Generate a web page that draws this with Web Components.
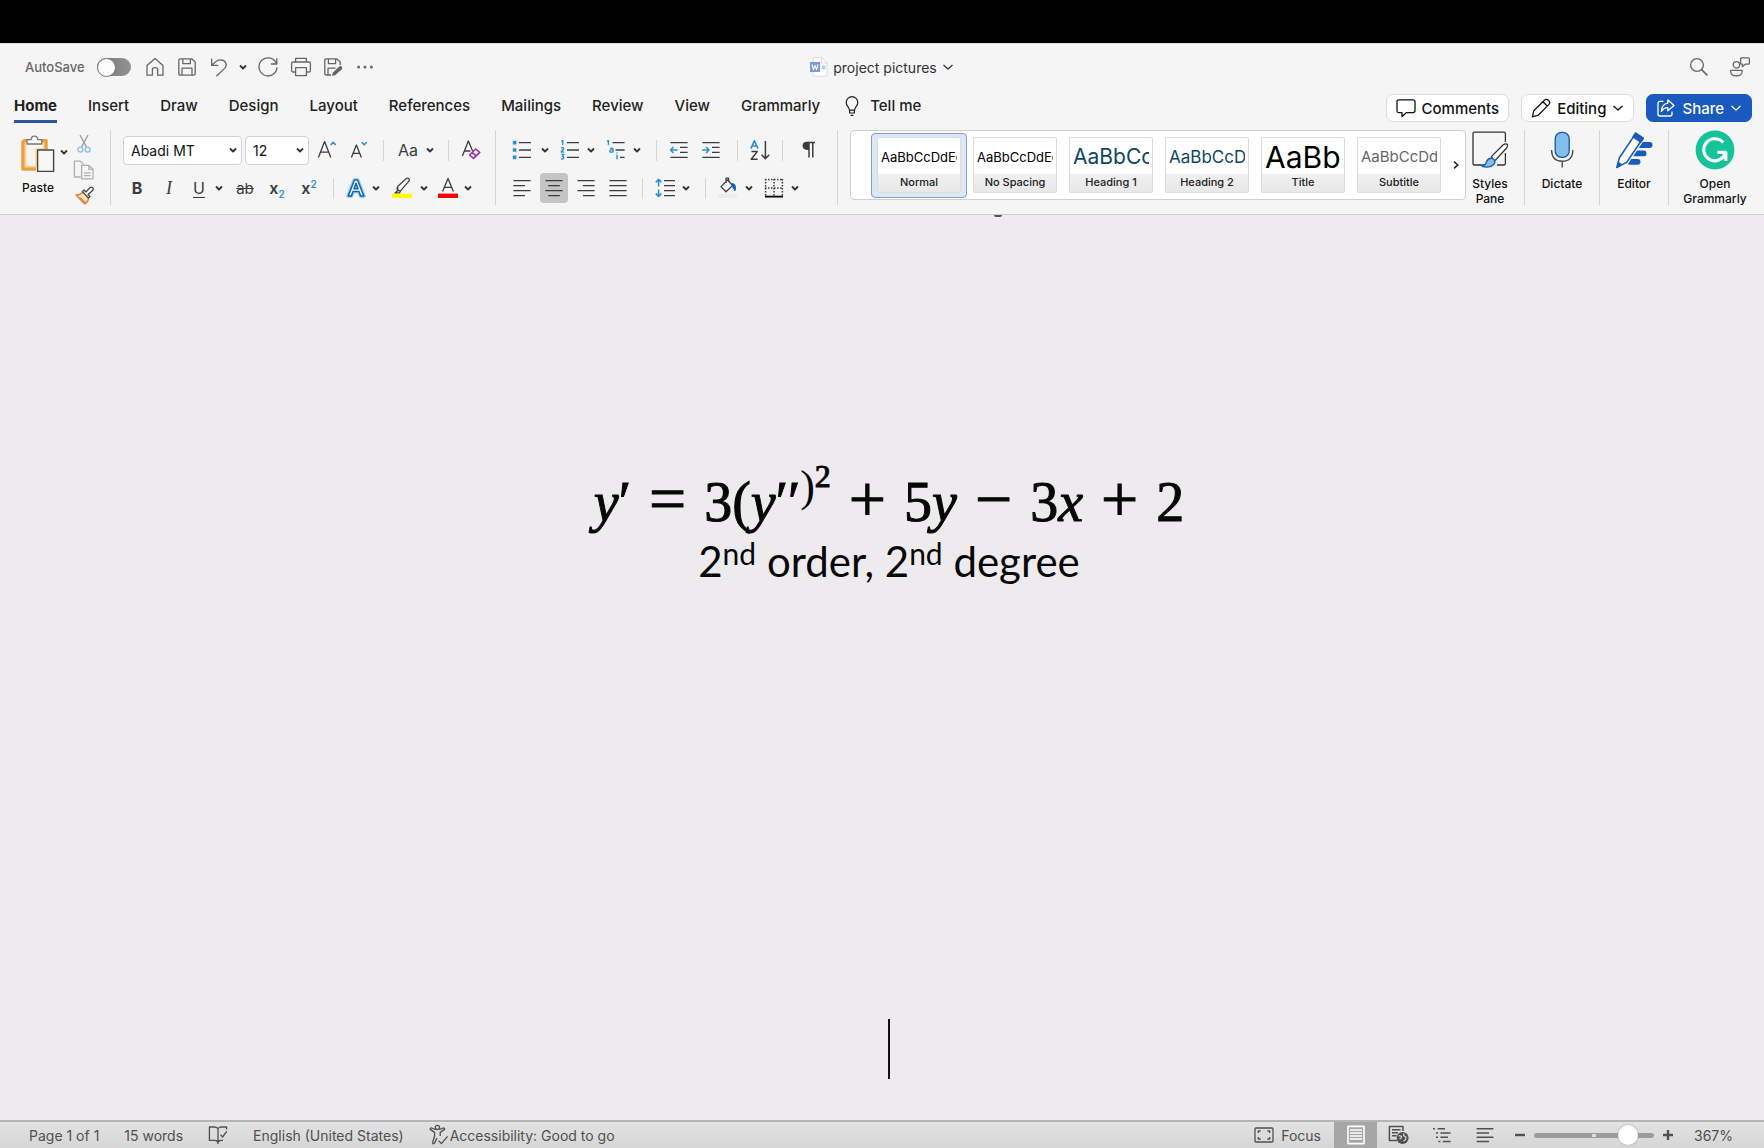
<!DOCTYPE html>
<html lang="en">
<head>
<meta charset="utf-8">
<title>project pictures</title>
<style>
html, body { margin: 0; height: 100%; }
body { font-family: Inter, "Liberation Sans", sans-serif; color: #1f1f1f; background: #000; overflow: hidden; }
</style>
</head>
<body>
<word-app></word-app>
<script>
const ICONS = {
  chev: [10, 10, '<path d="M2 3.5 5 6.5 8 3.5" stroke-width="1.8" stroke="#333"/>'],
  chevthin: [12, 12, '<path d="M1.5 4 6 8 10.5 4" stroke-width="1.3"/>'],
  right: [10, 10, '<path d="M3 1.6 6.8 5 3 8.4" stroke-width="1.6" stroke="#222"/>'],
  home: [20, 20, '<path d="M2 8.6 10 1.4 18 8.6V18.2H12.6V12.6Q12.6 10.6 10 10.6T7.4 12.6V18.2H2Z"/>'],
  save: [20, 20, '<path d="M3.5 1.8H14.6L18.2 5V16.5Q18.2 18.2 16.5 18.2H3.5Q1.8 18.2 1.8 16.5V3.5Q1.8 1.8 3.5 1.8ZM5.8 1.8V6.6H13.4V1.8M5 18.2V11.2H15V18.2"/>'],
  undo: [20, 20, '<path d="M2.6 1.6V8.4H9.2M2.8 8.2C6 4.6 8 2.8 11.5 2.8C16.5 2.8 19 7.8 15.6 11.4L7.4 19.2"/>'],
  redo: [22, 22, '<path d="M19.6 8.2A9 9 0 1 0 20 11.4M19.8 2.2V8H14"/>'],
  print: [22, 22, '<path d="M5.6 6V2.4H16.4V6M5.6 16H3.2Q1.6 16 1.6 14.4V7.8Q1.6 6 3.4 6H18.6Q20.4 6 20.4 7.8V14.4Q20.4 16 18.8 16H16.4M5.6 11.6H16.4V19.6H5.6Z"/>'],
  saveedit: [20, 20, '<path d="M8 18H3.5Q1.8 18 1.8 16.5V3.5Q1.8 1.8 3.5 1.8H13.6L17.2 5V8M5.4 1.8V6.6H12.6V1.8M5 18V11.2H12.6"/><path d="M8.8 19 10 15.6 16.2 9.6Q17.6 8.4 18.8 9.8T18.6 12.4L12.4 18Z" fill="currentColor" stroke="none"/>'],
  dots: [20, 20, '<g fill="currentColor" stroke="none"><circle cx="3.6" cy="10" r="1.5"/><circle cx="10" cy="10" r="1.5"/><circle cx="16.4" cy="10" r="1.5"/></g>'],
  doc: [18, 20, '<path d="M3 .8H11.6L17 6V19.2H3Z" fill="#fff" stroke="#dcdcdc" stroke-width="1"/><path d="M11.6 .8V6H17" stroke="#d0d0d0" stroke-width=".8"/><path d="M12 9.5H15.5M12 11.5H15.5" stroke="#9dc0ee"/><rect x="0" y="5" width="10" height="10" fill="#7b9bdc" stroke="none"/><path d="M2 7.4 3.5 12.6 5 8.4 6.5 12.6 8 7.4" stroke="#fff" stroke-width="1.1"/>'],
  search: [20, 20, '<circle cx="8" cy="8" r="6.4"/><path d="M12.6 12.6 18.4 18.4" stroke-width="1.5"/>'],
  person: [22, 22, '<circle cx="7.4" cy="8.8" r="3.2"/><path d="M1.6 14.4H13.2Q13.6 19.8 7.4 19.8T1.6 14.4ZM12.4 1.8H19.2Q20.4 1.8 20.4 3V7Q20.4 8.2 19.2 8.2H16.4L13.4 10.6V8.2H12.6Q11.6 8.2 11.6 7V3Q11.6 1.8 12.4 1.8Z"/>'],
  bulb: [16, 22, '<path d="M5.4 15.2C5.4 12 2.2 11.2 2.2 7.4A5.8 5.8 0 0 1 13.8 7.4C13.8 11.2 10.6 12 10.6 15.2ZM5.6 15.4V18H10.4V15.4M6.6 20.4H9.4" stroke-width="1.2"/>'],
  comment: [20, 20, '<path d="M3 1.8H17Q19 1.8 19 3.8V12.6Q19 14.6 17 14.6H10.6L6 18.6V14.6H3Q1 14.6 1 12.6V3.8Q1 1.8 3 1.8Z"/>'],
  pencil: [20, 20, '<path d="M1.4 18.8 2.8 12.8 13.4 2.2Q15.4 .4 17.6 2.4T17.8 6.6L7.2 17.2ZM12 3.8 16.2 8"/>'],
  share: [20, 20, '<path d="M7.4 3.4H4Q2 3.4 2 5.4V16Q2 18 4 18H14Q16 18 16 16V13.6"/><path d="M11.8 1.8 18 7.4 11.8 12.8V9.6Q7.8 9.6 5.4 13.4Q5.8 6 11.8 5.2Z"/>'],
  paste: [36, 38, '<path d="M3 5.6H26V14M16 34H3V5.6" stroke="#f29a3e" stroke-width="3.4"/><path d="M5.6 8H23.6V14H16V31.6H5.6Z" fill="#f7f4ee" stroke="#f9d08f" stroke-width="1.4"/><path d="M7 9V4.6H11Q11.4 1.2 14.4 1.2T17.8 4.6H21.8V9Z" fill="#f7f7f7" stroke="#777" stroke-width="1.3"/><rect x="17.6" y="15" width="16" height="21.4" fill="#f7f7f7" stroke="#444" stroke-width="1.4"/>'],
  cut: [14, 20, '<path d="M3 1 9.6 13.4M11 1 4.4 13.4" stroke="#9b9b9b"/><g stroke="#8cc0e6" stroke-width="1.4"><circle cx="3.4" cy="15.6" r="2.5"/><circle cx="10.6" cy="15.6" r="2.5"/></g>'],
  copy: [22, 20, '<g stroke="#b0b0b0"><path d="M7.6 17H1.4V1.2H7.4L10.6 4.4M8.6 5.4H16L20 9.2V18.8H8.6ZM15.8 5.4V9.4H20M11 12.8H17.6M11 15.6H17.6"/></g>'],
  brush: [20, 20, '<path d="M2 9 11 18Q15 14.6 14.4 11.4L8.8 5.8Q7.2 8.6 2 9Z" fill="#fbe3c4" stroke="#e8843a" stroke-width="1.6"/><path d="M6 12 11 17" stroke="#e8843a" stroke-width="2"/><path d="M8.4 5.6 10 4 12 6 16 1.6Q17.6.6 18.8 2T18 5L14 8.6 16 10.4 14.4 12Z" fill="#fff" stroke="#444"/>'],
  grow: [20, 22, '<path d="M1.4 18.4 7.6 2.6 13.8 18.4M3.6 13.2H11.6"/><path d="M13.6 6 16.2 3.4 18.8 6" stroke="#2b8fd4" stroke-width="1.6"/>'],
  shrink: [20, 22, '<path d="M2.4 18.4 7.4 6 12.4 18.4M4 14.4H10.8"/><path d="M12.6 3.2 15.2 5.8 17.8 3.2" stroke="#2b8fd4" stroke-width="1.6"/>'],
  eraser: [20, 22, '<path d="M1.4 17 7.4 2 11.6 12M3.6 12H9.4"/><path d="M8.6 16 14.6 10 18.8 13.4 12.6 19.4ZM11.2 13.6 15.4 17.2" stroke="#9b30a8" stroke-width="1.6"/>'],
  effects: [20, 20, '<g><path d="M2.2 18 8.4 2H11.6L17.8 18H14.6L13 13.6H7L5.4 18ZM8 10.8H12L10 5.2Z" stroke="#9dd0f2" stroke-width="4"/><path d="M2.2 18 8.4 2H11.6L17.8 18H14.6L13 13.6H7L5.4 18ZM8 10.8H12L10 5.2Z" fill="#fff" stroke="#0b63b5" stroke-width="1.5"/></g>'],
  highlight: [20, 22, '<path d="M5.6 9.4 14.4 1.4Q16 .6 17 1.8T16.6 4.4L9 13.4 6 13.6ZM5.8 9.6Q4.4 11.4 5.8 13.4L3 16H7.4L8.8 13.4" fill="#f7f7f7" stroke="#444"/><rect x="0" y="16.6" width="20" height="4.4" fill="#ffff00" stroke="none"/>'],
  fontcolor: [20, 22, '<path d="M4.6 14.4 10 1.4 15.4 14.4M6.4 10.4H13.6"/><rect x="0" y="16.6" width="20" height="4.4" fill="#f00" stroke="none"/>'],
  bullets: [20, 20, '<path d="M7 2.6H19M7 10H19M7 17.4H19"/><path d="M.8 .8h3.6v3.6H.8zM.8 8.2h3.6v3.6H.8zM.8 15.6h3.6v3.6H.8z" fill="#2b8fd4" stroke="none"/>'],
  numbers: [20, 20, '<path d="M7 2.6H19M7 10H19M7 17.4H19"/><g stroke="#2b8fd4" stroke-width="1.4"><path d="M1.4 1.4 2.8.6V5M1.2 8Q3.8 7 3.6 8.8L1.2 12H4M1.2 14.4H3.8L2.6 16.4Q4.4 17 3.4 18.6Q2.6 19.4 1 18.8"/></g>'],
  multi: [20, 20, '<path d="M6.6 2.6H18.6M9.6 10H18.6M14 17.4H18.6"/><g stroke="#2b8fd4" stroke-width="1.4"><path d="M1 1.4 2.4.6V5M4 8.6Q7 7.4 7 9.4V12.4M7 10Q3.8 9.6 3.8 11.2T7 11.8M11 14.8V19.2M11 12.4V13.4"/></g>'],
  outdent: [20, 20, '<path d="M1.4 2.6H18.6M11 7.4H18.6M11 12.4H18.6M1.4 17.4H18.6"/><path d="M8.6 10H1.6M4.4 7 1.6 10 4.4 13" stroke="#2b8fd4" stroke-width="1.6"/>'],
  indent: [20, 20, '<path d="M1.4 2.6H18.6M11 7.4H18.6M11 12.4H18.6M1.4 17.4H18.6"/><path d="M1 10H8M5.2 7 8 10 5.2 13" stroke="#2b8fd4" stroke-width="1.6"/>'],
  sort: [20, 20, '<path d="M.8 8.6 4.4.8 8 8.6M2 6H6.8" stroke="#2b8fd4" stroke-width="1.6"/><path d="M1.4 11.6H7.2L1.2 19.2H7.6M15.4 1V18.4M11.6 14.8 15.4 18.6 19.2 14.8" stroke-width="1.5"/>'],
  pilcrow: [16, 18, '<path d="M7.4 1.4H14M8 1.4V16.4M11.8 1.4V16.4" stroke-width="1.5"/><path d="M8 .8H6Q1.6 1 1.6 4.8T6 9H8Z" fill="currentColor" stroke="none"/>'],
  left: [20, 20, '<path d="M1.4 2.6H18.6M1.4 7.6H13M1.4 12.6H18.6M1.4 17.6H13"/>'],
  center: [20, 20, '<path d="M1.4 2.6H18.6M4.2 7.6H15.8M1.4 12.6H18.6M4.2 17.6H15.8"/>'],
  alignright: [20, 20, '<path d="M1.4 2.6H18.6M7 7.6H18.6M1.4 12.6H18.6M7 17.6H18.6"/>'],
  justify: [20, 20, '<path d="M1.4 2.6H18.6M1.4 7.6H18.6M1.4 12.6H18.6M1.4 17.6H18.6"/>'],
  spacing: [22, 20, '<path d="M10 2.6H21M10 7.6H21M10 12.6H21M10 17.6H21"/><path d="M4.6 1.4V8.4M1.8 4.2 4.6 1.4 7.4 4.2M4.6 11.4V18.4M1.8 15.6 4.6 18.4 7.4 15.6" stroke="#2b8fd4" stroke-width="1.6"/>'],
  bucket: [20, 22, '<path d="M3 9.6 9.6 3 14.6 8.6 8 14.8ZM8 6V1.2H10.6V5" stroke-width="1.3"/><path d="M14 6.6Q18.4 7.4 17 13.4Q15 11.4 14 6.6Z" fill="#0b63b5" stroke="#0b63b5"/><rect x="0" y="17" width="19" height="4" fill="#ececec" stroke="none"/>'],
  borders: [20, 20, '<g stroke-dasharray="1.5 1.5" stroke-width="1.5"><path d="M1 1.6H19M1.6 1V18M18.4 1V18M10 1V18M1 10H19"/></g><path d="M1 18.6H19" stroke="#000" stroke-width="1.8"/>'],
  styles: [38, 38, '<path d="M16 34H3.4Q2 34 2 32.6V2.6Q2 1.2 3.4 1.2H33Q34.4 1.2 34.4 2.6V11M34.4 22V32.6Q34.4 34 33 34H26" stroke="#333"/><path d="M20.4 25.6 32 14Q34.4 12.2 36.4 13.4Q37 15.4 35.6 17L24 29.6Q21 29 20.4 25.6Z" fill="#fff" stroke="#333"/><path d="M11 35.4Q14.6 34.4 15.6 30.4Q17.6 26.6 21.4 27.4Q24.6 29 23.6 32.4Q20 37.6 11 35.4Z" fill="#83bdea" stroke="#0b63b5"/>'],
  mic: [24, 38, '<rect x="5.2" y="1.4" width="14" height="25" rx="6.4" fill="#83bdea" stroke="#0b5cad"/><path d="M1.6 19Q1.6 30.2 12.2 30.2T22.8 19M12.2 30.2V36.4" stroke="#444"/>'],
  editor: [38, 38, '<path d="M24 14H34.6M20 22.4H28.6M15 30.8H22.6" stroke="#185abd" stroke-width="5.8" stroke-linecap="round"/><path d="M2 36.4 4.4 26.8 20.8 2.4 28 7.2 11.6 31.4Z" fill="#fff" stroke="#f5f5f5" stroke-width="4"/><path d="M2 36.4 4.4 26.8 20.8 2.4 28 7.2 11.6 31.4Z" fill="#fff" stroke="#185abd" stroke-width="1.6"/><path d="M20.6 2 28.4 7.4 25.8 11.2 18 5.8ZM2 36.4 3.2 31.4 6 33.4Z" fill="#185abd" stroke="#185abd" stroke-width="1.4"/>'],
  grammarly: [40, 40, '<circle cx="20" cy="20" r="19.4" fill="#15c39a" stroke="none"/><path d="M28.2 12.6A11 11 0 1 0 30.2 23.4M22.4 22.4H30.8V31" stroke="#fff" stroke-width="3.2"/>'],
  book: [20, 20, '<path d="M10 17.4V3.4Q8.4 2 6.4 2H1.4V15.4H7Q9 15.4 10 17.4ZM10 3.4Q11.4 2 13.4 2H18.6V4.6M10 17.4Q11 15.4 13 15.4H15M12.6 9.6 14.6 12 18.8 6.4M10 16V19"/>'],
  access: [20, 22, '<circle cx="8.4" cy="3.4" r="2.1"/><path d="M6.6 5.6 2.6 4Q.8 4 1.2 5.4L5.6 8.4V12L3.6 18.6Q4 20.8 5.4 19.4L8 14M10.2 5.6 14.2 4Q16 4 15.6 5.4L11.2 8.4V12M9.6 16.6 12.4 19.6 18.6 12.4"/>'],
  focus: [20, 16, '<rect x="1" y="1" width="18" height="14" rx="1"/><path d="M4.4 6V4H6.6M13.4 4H15.6V6M15.6 10V12H13.4M6.6 12H4.4V10" stroke-width="1.5"/>'],
  layout: [20, 20, '<rect x="2" y="1.4" width="16" height="17.2" stroke="#fff" stroke-width="1.6"/><path d="M4 5H16M4 8H16M4 11H16M4 14H16" stroke="#fff"/>'],
  web: [22, 20, '<path d="M9 15.4H1.4V1.4H15V6M4 4.8H12.6M4 7.8H10M4 10.8H8.6" stroke-width="1.5"/><circle cx="14.6" cy="13" r="6" fill="currentColor" stroke="none"/><path d="M10.6 10.6 13.6 11.2 13 13.2 11.6 14M16 8.4 15.4 10.6 18 12 17.6 14.6 15.4 16" stroke="#ddd" stroke-width="1.1"/>'],
  outline: [20, 16, '<path d="M1 1.8H3M5.6 1.8H13M4 6H6M8.4 6H18.6M4 10.2H6M8.4 10.2H16M6.4 14.4H8.4M10.8 14.4H18.6" stroke-width="1.5"/>'],
  draft: [20, 16, '<path d="M1.6 1.8H18.4M1.6 6H14M1.6 10.2H18.4M1.6 14.4H14" stroke-width="1.5"/>'],
  minus: [12, 12, '<path d="M1 6H11" stroke-width="2.4"/>'],
  plus: [12, 12, '<path d="M1 6H11M6 1V11" stroke-width="2.4"/>']
};

class UiIcon extends HTMLElement {
  connectedCallback() {
    const [w, h, body] = ICONS[this.getAttribute('name')];
    this.attachShadow({ mode: 'open' }).innerHTML =
      `<style>:host{display:block;flex:none;width:${w}px;height:${h}px}svg{display:block}</style>
       <svg width="${w}" height="${h}" viewBox="0 0 ${w} ${h}" fill="none" stroke="currentColor" stroke-width="1.3" stroke-linejoin="round" aria-hidden="true">${body}</svg>`;
  }
}
customElements.define('ui-icon', UiIcon);

const RESET = `:host,*{box-sizing:border-box}button{font:inherit;color:inherit;background:none;border:0;padding:0;margin:0;display:flex;align-items:center;justify-content:center}`;

/* Square tool button; "menu" adds the drop-down arrow, "w" sets the width of the face. */
class ToolButton extends HTMLElement {
  connectedCallback() {
    const icon = this.getAttribute('icon');
    this.attachShadow({ mode: 'open' }).innerHTML = `<style>${RESET}
      :host{display:flex;align-items:center;height:30px;flex:none}
      .face{width:${this.getAttribute('w') || 24}px;height:30px;border-radius:4px;white-space:nowrap}
      .menu{width:var(--chev,16px);height:30px}
      :host([active]) .face{background:#c4c4c4}
    </style>
    <button class="face" aria-label="${this.getAttribute('label')}">${icon ? `<ui-icon name="${icon}"></ui-icon>` : '<slot></slot>'}</button>
    ${this.hasAttribute('menu') ? '<button class="menu" aria-label="More options"><ui-icon name="chev"></ui-icon></button>' : ''}`;
  }
}
customElements.define('tool-button', ToolButton);

class TallButton extends HTMLElement {
  connectedCallback() {
    this.attachShadow({ mode: 'open' }).innerHTML = `<style>${RESET}
      :host{display:block;flex:none;width:${this.getAttribute('w')}px}
      button{flex-direction:column;gap:6px;width:100%}
      .art{height:40px;display:flex;align-items:center}
      .text{font-size:12px;line-height:15px;font-weight:500;color:#111;text-align:center}
    </style><button><span class="art"><ui-icon name="${this.getAttribute('icon')}"></ui-icon></span><span class="text"><slot></slot></span></button>`;
  }
}
customElements.define('tall-button', TallButton);

class PickList extends HTMLElement {
  connectedCallback() {
    this.attachShadow({ mode: 'open' }).innerHTML = `<style>${RESET}
      :host{display:grid;grid-template-columns:1fr 14px;align-items:center;flex:none;width:${this.getAttribute('w')}px}
      select{grid-area:1/1/2/3;appearance:none;height:29px;width:100%;font:400 14px Inter,sans-serif;color:#111;background:#fff;border:1px solid #d2d2d2;border-radius:4px;padding:0 14px 0 7px;margin:0}
      ui-icon{grid-area:1/2;pointer-events:none;color:#222}
    </style><select aria-label="${this.getAttribute('label')}"><option>${this.getAttribute('value')}</option></select><ui-icon name="chev"></ui-icon>`;
  }
}
customElements.define('pick-list', PickList);

class StyleCard extends HTMLElement {
  connectedCallback() {
    this.attachShadow({ mode: 'open' }).innerHTML = `<style>${RESET}
      :host{display:block;flex:none}
      button{display:block;width:96px;height:65px;padding:0 5px;border:1px solid transparent;border-radius:4px;text-align:left}
      :host([selected]) button{background:#dce6f5;border-color:#7ba0d8}
      .card{display:block;border:1px solid #dcdcdc;border-radius:2px;background:#fff;overflow:hidden}
      .sample{display:block;height:36px;line-height:38px;margin:0 3px;overflow:hidden;white-space:nowrap;color:${this.getAttribute('ink') || '#000'};font-size:${this.getAttribute('size')}px}
      .name{display:block;height:18px;line-height:17px;font-size:11px;font-weight:500;color:#222;text-align:center;background:linear-gradient(#f0f0f0,#e8e8e8)}
    </style><button><span class="card"><span class="sample">${this.getAttribute('sample')}</span><span class="name"><slot></slot></span></span></button>`;
  }
}
customElements.define('style-card', StyleCard);

class TitleBar extends HTMLElement {
  connectedCallback() {
    this.attachShadow({ mode: 'open' }).innerHTML = `<style>${RESET}
      :host{display:grid;grid-template-columns:1fr auto 1fr;align-items:center;height:48px;border-top:1px solid #ddd;padding-bottom:1px;color:#666}
      .quick{display:flex;align-items:center;padding-left:25px}
      label{display:flex;align-items:center;gap:12px;margin-right:8px;font-size:13px;font-weight:500}
      input{appearance:none;width:34px;height:18px;margin:0;border-radius:9px;background:linear-gradient(90deg,#777,#929292);display:flex;align-items:center}
      input::before{content:"";width:17px;height:17px;border-radius:50%;background:#fdfdfd;border:1px solid #777}
      .file{display:flex;align-items:center;gap:5px;font-size:14px;color:#333}
      .end{display:flex;justify-content:flex-end;gap:20px;padding-right:13px}
    </style>
    <div class="quick">
      <label>AutoSave<input type="checkbox" role="switch"></label>
      <tool-button w="32" icon="home" label="Home"></tool-button>
      <tool-button w="32" icon="save" label="Save"></tool-button>
      <tool-button w="32" icon="undo" label="Undo" menu></tool-button>
      <tool-button w="34" icon="redo" label="Redo"></tool-button>
      <tool-button w="32" icon="print" label="Print"></tool-button>
      <tool-button w="32" icon="saveedit" label="Save as"></tool-button>
      <tool-button w="32" icon="dots" label="More"></tool-button>
    </div>
    <button class="file"><ui-icon name="doc"></ui-icon>project pictures<ui-icon name="chevthin"></ui-icon></button>
    <div class="end">
      <button aria-label="Search"><ui-icon name="search"></ui-icon></button>
      <button aria-label="Account"><ui-icon name="person"></ui-icon></button>
    </div>`;
  }
}
customElements.define('title-bar', TitleBar);

class TabBar extends HTMLElement {
  connectedCallback() {
    const tabs = ['Home', 'Insert', 'Draw', 'Design', 'Layout', 'References', 'Mailings', 'Review', 'View', 'Grammarly'];
    this.attachShadow({ mode: 'open' }).innerHTML = `<style>${RESET}
      :host{display:flex;align-items:center;justify-content:space-between;height:36px;padding:0 12px 2px 14px;font-size:15px;color:#222}
      nav{display:flex;gap:31px;align-self:flex-start}
      nav button{height:32px;font-weight:500;border-bottom:3px solid transparent}
      nav .on{font-weight:700;border-bottom-color:#2b579a}
      nav .tell{gap:10px;margin-left:-7px}
      .actions{display:flex;gap:12px}
      .actions button{height:28px;padding:0 9px;gap:6px;border:1px solid #dcdcdc;border-radius:7px;background:#fff;color:#111;font-weight:500}
      .actions .share{background:#185abd;border-color:#185abd;color:#fff}
    </style>
    <nav>${tabs.map((t, i) => `<button${i ? '' : ' class="on"'}>${t}</button>`).join('')}<button class="tell"><ui-icon name="bulb"></ui-icon>Tell me</button></nav>
    <div class="actions">
      <button><ui-icon name="comment"></ui-icon>Comments</button>
      <button><ui-icon name="pencil"></ui-icon>Editing<ui-icon name="chevthin"></ui-icon></button>
      <button class="share"><ui-icon name="share"></ui-icon>Share<ui-icon name="chevthin"></ui-icon></button>
    </div>`;
  }
}
customElements.define('tab-bar', TabBar);

class RibbonBar extends HTMLElement {
  connectedCallback() {
    this.attachShadow({ mode: 'open' }).innerHTML = `<style>${RESET}
      :host{display:flex;align-items:flex-start;height:88px;padding:3px 13px 9px 18px;border-bottom:1px solid #cfcfcf;color:#3c3c3c}
      .sep{flex:none;width:1px;height:75px;background:#d4d4d4;margin:0 12px}
      .sep.near{margin:0 10px}
      .div{flex:none;width:1px;height:21px;background:#d4d4d4;margin:0 6px}
      .rows{display:flex;flex-direction:column;gap:8px;padding-top:5px}
      .row{display:flex;align-items:center;gap:4px;height:30px}
      .para{--chev:18px}
      .clip{display:flex;padding-top:4px}
      .drop{width:12px;height:36px}
      .small{display:flex;flex-direction:column;justify-content:space-between;width:28px;height:72px;align-items:center}
      .pick{display:flex;gap:3px}
      .b{font-size:16px;font-weight:700}
      .i{font:italic 18px "Liberation Serif",serif}
      .u{font-size:16px;text-decoration:underline;text-underline-offset:3px}
      .s{font-size:15px;text-decoration:line-through}
      .x{font-size:16px;font-weight:600}
      .aa{font-size:16px}
      sub,sup{font-size:10px;color:#2b8fd4;line-height:0}
      .gallery{display:flex;align-items:center;flex:1;min-width:0;height:70px;border:1px solid #cfcfcf;border-radius:4px;background:#fff;padding-left:20px;overflow:hidden}
      .more{flex:1;height:60px}
    </style>
    <div class="clip">
      <tall-button w="40" icon="paste">Paste</tall-button>
      <button class="drop" aria-label="Paste options"><ui-icon name="chev"></ui-icon></button>
      <div class="small">
        <button aria-label="Cut"><ui-icon name="cut"></ui-icon></button>
        <button aria-label="Copy"><ui-icon name="copy"></ui-icon></button>
        <button aria-label="Format painter"><ui-icon name="brush"></ui-icon></button>
      </div>
    </div>
    <div class="sep"></div>
    <div class="rows">
      <div class="row">
        <div class="pick"><pick-list w="119" label="Font" value="Abadi MT"></pick-list><pick-list w="64" label="Font size" value="12"></pick-list></div>
        <tool-button w="28" icon="grow" label="Grow font"></tool-button>
        <tool-button w="28" icon="shrink" label="Shrink font"></tool-button>
        <div class="div"></div>
        <tool-button w="28" label="Change case" menu><span class="aa">Aa</span></tool-button>
        <div class="div"></div>
        <tool-button w="24" icon="eraser" label="Clear formatting"></tool-button>
      </div>
      <div class="row">
        <tool-button w="28" label="Bold"><span class="b">B</span></tool-button>
        <tool-button w="28" label="Italic"><span class="i">I</span></tool-button>
        <tool-button w="24" label="Underline" menu><span class="u">U</span></tool-button>
        <tool-button w="28" label="Strikethrough"><span class="s">ab</span></tool-button>
        <tool-button w="28" label="Subscript"><span class="x">x<sub>2</sub></span></tool-button>
        <tool-button w="28" label="Superscript"><span class="x">x<sup>2</sup></span></tool-button>
        <div class="div"></div>
        <tool-button w="24" icon="effects" label="Text effects" menu></tool-button>
        <tool-button w="28" icon="highlight" label="Highlight" menu></tool-button>
        <tool-button w="24" icon="fontcolor" label="Font colour" menu></tool-button>
      </div>
    </div>
    <div class="sep"></div>
    <div class="rows para">
      <div class="row">
        <tool-button w="28" icon="bullets" label="Bullets" menu></tool-button>
        <tool-button w="24" icon="numbers" label="Numbering" menu></tool-button>
        <tool-button w="24" icon="multi" label="Multilevel list" menu></tool-button>
        <div class="div"></div>
        <tool-button w="24" icon="outdent" label="Decrease indent"></tool-button>
        <tool-button w="32" icon="indent" label="Increase indent"></tool-button>
        <div class="div"></div>
        <tool-button w="24" icon="sort" label="Sort"></tool-button>
        <div class="div"></div>
        <tool-button w="32" icon="pilcrow" label="Show marks"></tool-button>
      </div>
      <div class="row">
        <tool-button w="28" icon="left" label="Align left"></tool-button>
        <tool-button w="28" icon="center" label="Centre" active></tool-button>
        <tool-button w="28" icon="alignright" label="Align right"></tool-button>
        <tool-button w="28" icon="justify" label="Justify"></tool-button>
        <div class="div"></div>
        <tool-button w="24" icon="spacing" label="Line spacing" menu></tool-button>
        <div class="div"></div>
        <tool-button w="24" icon="bucket" label="Shading" menu></tool-button>
        <tool-button w="24" icon="borders" label="Borders" menu></tool-button>
      </div>
    </div>
    <div class="sep"></div>
    <div class="gallery">
      <style-card selected size="13" sample="AaBbCcDdEe">Normal</style-card>
      <style-card size="13" sample="AaBbCcDdEe">No Spacing</style-card>
      <style-card size="21" ink="#0f4761" sample="AaBbCc">Heading 1</style-card>
      <style-card size="17" ink="#0f4761" sample="AaBbCcDd">Heading 2</style-card>
      <style-card size="30" sample="AaBbC">Title</style-card>
      <style-card size="15" ink="#666" sample="AaBbCcDd">Subtitle</style-card>
      <button class="more" aria-label="More styles"><ui-icon name="right"></ui-icon></button>
    </div>
    <tall-button w="48" icon="styles">Styles Pane</tall-button>
    <div class="sep near"></div>
    <tall-button w="54" icon="mic">Dictate</tall-button>
    <div class="sep near"></div>
    <tall-button w="48" icon="editor">Editor</tall-button>
    <div class="sep near"></div>
    <tall-button w="72" icon="grammarly">Open Grammarly</tall-button>`;
  }
}
customElements.define('ribbon-bar', RibbonBar);

class DocumentPage extends HTMLElement {
  connectedCallback() {
    this.attachShadow({ mode: 'open' }).innerHTML = `<style>${RESET}
      :host{display:flex;flex-direction:column;align-items:center;flex:1;min-height:0;padding-left:14px;background:#eeebee;color:#080808;overflow:hidden}
      p{margin:0;white-space:nowrap}
      .eq{margin-top:256px;display:flex;align-items:baseline;gap:18px;font:56px/58px "Liberation Serif",serif;-webkit-text-stroke:1px #080808}
      .op{font-size:66px;line-height:0}
      .up{position:relative;bottom:20px;font-size:44px;line-height:0;-webkit-text-stroke:0}
      .eq sup{font-size:32px;line-height:0;vertical-align:34px}
      .text{font:42px/60px Lato,sans-serif}
      .text sup{font-size:30px;line-height:0;vertical-align:12px}
      .caret{width:2px;height:60px;margin-top:428px;background:#111}
      .tail{width:8px;height:2px;border-radius:0 0 4px 4px;background:#555;align-self:flex-start;margin-left:56%}
    </style>
    <div class="tail"></div>
    <p class="eq"><span><i>y</i>′</span><span class="op">=</span><span>3(<i>y</i>′′<span class="up">)</span><sup>2</sup></span><span class="op">+</span><span>5<i>y</i></span><span class="op">−</span><span>3<i>x</i></span><span class="op">+</span><span>2</span></p>
    <p class="text">2<sup>nd</sup> order, 2<sup>nd</sup> degree</p>
    <div class="caret"></div>`;
  }
}
customElements.define('document-page', DocumentPage);

class StatusBar extends HTMLElement {
  connectedCallback() {
    this.attachShadow({ mode: 'open' }).innerHTML = `<style>${RESET}
      :host{display:flex;align-items:stretch;justify-content:space-between;height:28px;border-top:2px solid #b4b4b4;background:linear-gradient(#e2e2e2,#d6d6d6);font-size:14px;color:#505050;padding:0 30px 0 29px}
      .side{display:flex;align-items:center;gap:25px}
      .views{display:flex;align-items:stretch}
      .views button{width:43px}
      .views .on{background:#a6a6a6}
      .views .focus{width:auto;gap:7px;margin-right:13px}
      .acc{gap:1px}
      .zoom{display:flex;align-items:center;gap:8px;margin-left:8px}
      input{appearance:none;width:120px;height:20px;margin:0;background:none}
      input::-webkit-slider-runnable-track{height:5px;border-radius:3px;background:radial-gradient(circle at 50% 50%,#ddd 2px,transparent 2px),#9c9c9c}
      input::-webkit-slider-thumb{appearance:none;width:20px;height:20px;margin-top:-8px;border-radius:50%;background:#fff;box-shadow:0 0 2px #999}
      output{margin-left:12px;width:40px}
    </style>
    <div class="side"><span>Page 1 of 1</span><span>15 words</span><button aria-label="Proofing"><ui-icon name="book"></ui-icon></button><button>English (United States)</button><button class="acc"><ui-icon name="access"></ui-icon>Accessibility: Good to go</button></div>
    <div class="views">
      <button class="focus"><ui-icon name="focus"></ui-icon>Focus</button>
      <button class="on" aria-label="Print layout"><ui-icon name="layout"></ui-icon></button>
      <button aria-label="Web layout"><ui-icon name="web"></ui-icon></button>
      <button aria-label="Outline"><ui-icon name="outline"></ui-icon></button>
      <button aria-label="Draft"><ui-icon name="draft"></ui-icon></button>
      <div class="zoom"><ui-icon name="minus"></ui-icon><input type="range" min="0" max="100" value="84" aria-label="Zoom"><ui-icon name="plus"></ui-icon><output>367%</output></div>
    </div>`;
  }
}
customElements.define('status-bar', StatusBar);

class WordApp extends HTMLElement {
  connectedCallback() {
    this.attachShadow({ mode: 'open' }).innerHTML = `<style>
      :host{display:flex;flex-direction:column;height:100vh;box-sizing:border-box;padding-top:43px;background:#000}
      header{background:#f5f5f5;flex:none}
    </style>
    <header><title-bar></title-bar><tab-bar></tab-bar><ribbon-bar></ribbon-bar></header>
    <document-page></document-page>
    <status-bar></status-bar>`;
  }
}
customElements.define('word-app', WordApp);
</script>
</body>
</html>
